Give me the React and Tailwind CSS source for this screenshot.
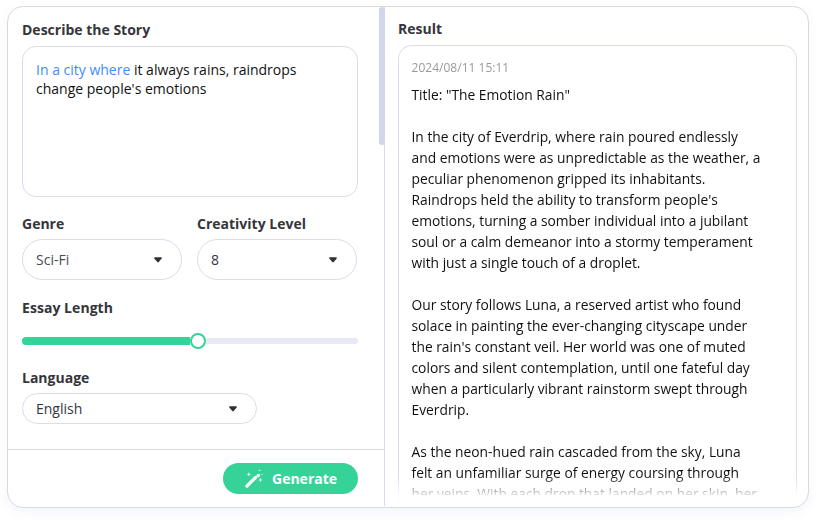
import React from "react";

function Label({ children, className = "" }) {
  return (
    <div className={"h-5 text-[14px] leading-5 font-bold text-[#35353b] whitespace-nowrap " + className}>
      {children}
    </div>
  );
}

function Select({ value, className = "", tone = "text-[#35353b]" }) {
  return (
    <div
      className={
        "flex items-center justify-between rounded-full border border-[#dbdaee] pl-[13px] pr-[19px] text-[14px] " +
        tone + " " + className
      }
    >
      <span>{value}</span>
      <svg width="8" height="6" viewBox="0 0 8 6" className="mt-px text-[#303036]">
        <path
          d="M1 .3h6c.8 0 1.100.6.7 1.100L4.700 5c-.4.500-1 .5-1.400 0L.3 1.400C-.1.900.2.3 1 .3Z"
          fill="currentColor"
        />
      </svg>
    </div>
  );
}

function WandIcon() {
  return (
    <svg width="20" height="20" viewBox="0 0 20 20" fill="none">
      <path d="M2.900 17.100 11.600 8.400" stroke="white" strokeWidth="3.300" strokeLinecap="round" />
      <path d="m12.200 6.300 1.100-1.100a1.600 1.600 0 0 1 2.300 2.300l-1.100 1.100Z" fill="white" />
      <path
        d="m4.800 3.200.6 1.500 1.500.6-1.500.6-.6 1.500-.6-1.500-1.500-.6 1.500-.6ZM16.400 8.800l.6 1.600 1.600.6-1.600.6-.6 1.600-.6-1.600-1.600-.6 1.600-.6ZM15.600.5l1 .8-1 .8-1-.8ZM18 4.700l.8.7-.8.7-.8-.7Z"
        fill="white"
      />
    </svg>
  );
}

const story = [
  'Title: "The Emotion Rain"',
  "",
  "In the city of Everdrip, where rain poured endlessly",
  "and emotions were as unpredictable as the weather, a",
  "peculiar phenomenon gripped its inhabitants.",
  "Raindrops held the ability to transform people's",
  "emotions, turning a somber individual into a jubilant",
  "soul or a calm demeanor into a stormy temperament",
  "with just a single touch of a droplet.",
  "",
  "Our story follows Luna, a reserved artist who found",
  "solace in painting the ever-changing cityscape under",
  "the rain's constant veil. Her world was one of muted",
  "colors and silent contemplation, until one fateful day",
  "when a particularly vibrant rainstorm swept through",
  "Everdrip.",
  "",
  "As the neon-hued rain cascaded from the sky, Luna",
  "felt an unfamiliar surge of energy coursing through",
  "her veins. With each drop that landed on her skin, her",
];

export default function App() {
  return (
    <div className="h-[520px] w-[820px] overflow-hidden bg-white pl-[7px] pt-[6px] font-['Open_Sans',sans-serif]">
      <div className="flex h-[502px] w-[802px] rounded-[16px] border border-[#d9dade] bg-white shadow-[0_4px_12px_rgba(80,120,180,0.07)]">
        <section className="relative flex w-[377px] flex-col">
          <div className="h-[442px] pl-[14px] pt-[13px]">
            <Label>Describe the Story</Label>
            <div className="mt-[6px] h-[151px] w-[336px] rounded-[14px] border border-[#dbdaee] px-[13px] pt-[13px] text-[14px] leading-[19px] text-[#111114]">
              <span className="text-[#3f8bff]">In a city where</span> it always rains, raindrops
              <br />
              change people's emotions
            </div>
            <div className="mt-[17px] flex gap-[15px]">
              <div className="w-[160px]">
                <Label>Genre</Label>
                <Select value="Sci-Fi" className="mt-[5px] h-[41px]" tone="text-[#4b4b50]" />
              </div>
              <div className="w-[160px]">
                <Label>Creativity Level</Label>
                <Select value="8" className="mt-[5px] h-[41px]" />
              </div>
            </div>
            <Label className="mt-[18px] tracking-[0.05px]">Essay Length</Label>
            <div className="mt-[15px] flex h-4 w-[336px] items-center">
              <div className="h-2 w-[168px] rounded-l-full bg-[#36d399]" />
              <div className="h-4 w-4 shrink-0 rounded-full border-2 border-[#36d399] bg-white" />
              <div className="h-[6px] flex-1 rounded-r-full bg-[#e9e8f5]" />
            </div>
            <Label className="mt-[19px]">Language</Label>
            <Select value="English" className="mt-[5px] h-[31px] w-[235px]" />
          </div>
          <div className="flex flex-1 justify-end border-t border-[#d9d8ec] pr-[27px] pt-[13px]">
            <button className="flex h-[31px] w-[135px] items-center rounded-full bg-[#36d399] pl-[21px] text-[14px] font-bold text-white">
              <WandIcon />
              <span className="ml-[8px]">Generate</span>
            </button>
          </div>
          <div className="absolute right-0 top-0 h-[138px] w-[6px] rounded-[3px] bg-[#d3d5eb]" />
        </section>

        <section className="h-[499px] flex-1 border-l border-[#d9d8ec] -ml-px pl-[13px] pt-[12px]">
          <Label>Result</Label>
          <div className="mt-[6px] h-[450px] w-[399px] overflow-hidden rounded-t-[14px] border border-b-0 border-[#dbdaee] pl-[12.500px] pt-[12px] [mask-image:linear-gradient(to_bottom,black_430px,transparent_453px)]">
            <div className="h-5 text-[12px] leading-5 tracking-[0.02px] text-[#9a9a9c]">2024/08/11 15:11</div>
            <div className="mt-[6px] text-[13.800px] leading-[21px] text-[#111114]">
              {story.map((line, i) => (
                <div key={i} className="h-[21px] whitespace-nowrap">
                  {line}
                </div>
              ))}
            </div>
          </div>
        </section>
      </div>
    </div>
  );
}
